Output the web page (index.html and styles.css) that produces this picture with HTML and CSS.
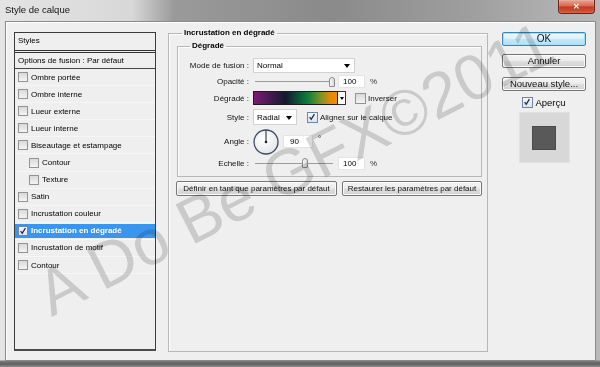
FILE: index.html
```html
<!DOCTYPE html>
<html lang="fr">
<head>
	<meta charset="UTF-8">
	<title>Style de calque</title>
	<link rel="stylesheet" href="styles.css">
</head>
<body>
	<div class="window">
		<div class="titlebar">
			<span class="title">Style de calque</span>
			<span class="close">&#x2715;</span>
		</div>
		<div class="dialog">
			<ul class="styles">
				<li class="head">Styles</li>
				<li class="head2">Options de fusion : Par défaut</li>
				<li><i class="cb"></i>Ombre portée</li>
				<li><i class="cb"></i>Ombre interne</li>
				<li><i class="cb"></i>Lueur externe</li>
				<li><i class="cb"></i>Lueur interne</li>
				<li><i class="cb"></i>Biseautage et estampage</li>
				<li class="sub"><i class="cb"></i>Contour</li>
				<li class="sub"><i class="cb"></i>Texture</li>
				<li><i class="cb"></i>Satin</li>
				<li><i class="cb"></i>Incrustation couleur</li>
				<li class="act"><i class="cb on"><svg viewBox="0 0 10 10"><path d="M2 5 L4 8 L8 1.5"/></svg></i>Incrustation en dégradé</li>
				<li><i class="cb"></i>Incrustation de motif</li>
				<li><i class="cb"></i>Contour</li>
			</ul>

			<fieldset class="panel">
				<legend>Incrustation en dégradé</legend>
				<fieldset class="group">
					<legend>Dégradé</legend>
					<div class="row r1">
						<label>Mode de fusion :</label>
						<div class="select wide">Normal<b></b></div>
					</div>
					<div class="row r2">
						<label>Opacité :</label>
						<div class="slider"><span class="thumb" style="margin-left:76px"></span></div>
						<div class="num">100</div>
						<span class="unit">%</span>
					</div>
					<div class="row r3">
						<label>Dégradé :</label>
						<div class="grad"></div>
						<div class="gbtn"><b></b></div>
						<i class="cb small"></i><span class="txt">Inverser</span>
					</div>
					<div class="row r4">
						<label>Style :</label>
						<div class="select narrow">Radial<b></b></div>
						<i class="cb small on"><svg viewBox="0 0 10 10"><path d="M2 5 L4 8 L8 1.5"/></svg></i><span class="txt">Aligner sur le calque</span>
					</div>
					<div class="row r5">
						<label>Angle :</label>
						<svg class="dial" viewBox="0 0 26 26">
							<defs>
								<radialGradient id="dg" cx="40%" cy="35%" r="70%">
									<stop offset="0" stop-color="#ffffff"/>
									<stop offset="1" stop-color="#e4e6ea"/>
								</radialGradient>
							</defs>
							<circle cx="13" cy="13" r="12" fill="url(#dg)" stroke="#3b4a66" stroke-width="1.3"/>
							<line x1="13" y1="13" x2="13" y2="1.5" stroke="#222" stroke-width="1"/>
							<circle cx="13" cy="13" r="1.3" fill="#222"/>
						</svg>
						<div class="num angle">90</div>
						<span class="deg">°</span>
					</div>
					<div class="row r6">
						<label>Echelle :</label>
						<div class="slider"><span class="thumb" style="margin-left:49px"></span></div>
						<div class="num">100</div>
						<span class="unit">%</span>
					</div>
				</fieldset>
				<div class="btns">
					<button class="b1">Définir en tant que paramètres par défaut</button>
					<button class="b2">Restaurer les paramètres par défaut</button>
				</div>
			</fieldset>

			<div class="side">
				<button class="ok">OK</button>
				<button class="cancel">Annuler</button>
				<button class="new">Nouveau style...</button>
				<div class="check"><i class="cb on"><svg viewBox="0 0 10 10"><path d="M2 5 L4 8 L8 1.5"/></svg></i>Aperçu</div>
				<div class="preview"><div class="sq"></div></div>
			</div>
		</div>
	</div>
	<div class="mark">A Do Be GFX©2011</div>
</body>
</html>
```

FILE: styles.css
```css
*{
	box-sizing: border-box;
}
body{
	margin: 0;
	width: 600px;
	height: 367px;
	overflow: hidden;
	position: relative;
	font-family: "Liberation Sans", Arial, sans-serif;
	font-size: 8px;
	color: #000;
}
ul{
	list-style: none;
	margin: 0;
	padding: 0;
}
.window{
	height: 367px;
	display: flex;
	flex-direction: column;
	padding: 0 4px 6px 5px;
	background:
		linear-gradient(to bottom, transparent 360px, #7c7c7c 361px, #5f5f5f 364px, #8c8c8c 367px),
		linear-gradient(to right, #e4e4e4 0, #d8d8d8 22%, #9a9a9a 29%, #8a8a8a 55%, #9e9e9e 78%, #b9b9b9 100%);
}
.titlebar{
	height: 21px;
	display: flex;
	align-items: flex-start;
	flex: none;
}
.title{
	font-size: 9.5px;
	line-height: 20px;
	color: #111;
}
.close{
	margin-left: auto;
	margin-right: 1px;
	width: 37px;
	height: 14px;
	font-size: 8px;
	font-weight: bold;
	line-height: 13px;
	text-align: center;
	color: #fff;
	background: linear-gradient(#eaa597, #d9644b 48%, #c23a20 52%, #d4583b);
	border: 1px solid #6b2216;
	border-top: none;
	border-radius: 0 0 4px 4px;
	box-shadow: 0 0 1px #fff inset;
}
.dialog{
	flex: 1;
	display: flex;
	align-items: flex-start;
	padding: 10px 0 0 8px;
	background: #efefef;
	border: 1px solid #8a8a8a;
	box-shadow: 1px 1px 0 #fff inset;
}

/* liste des styles */
.styles{
	width: 142px;
	height: 319px;
	flex: none;
	background: #efefef;
	border: 1px solid #3c3c3c;
	border-bottom: 2px solid #4a4a4a;
}
.styles li{
	height: 17.1px;
	display: flex;
	align-items: center;
	padding-left: 3px;
	border-bottom: 1px solid #f6f6f6;
	white-space: nowrap;
}
.styles .head{
	height: 20px;
	padding-bottom: 2px;
	border-bottom: 3px double #333;
}
.styles .head2{
	height: 16px;
	border-bottom: 1px solid #444;
}
.styles .sub{
	padding-left: 14px;
}
.styles .act{
	background: linear-gradient(#3a95ef, #3a95ef) 0 1px / 100% 14px no-repeat;
	color: #fff;
	font-weight: bold;
}
.cb{
	display: inline-block;
	flex: none;
	width: 10px;
	height: 10px;
	margin-right: 3px;
	border: 1px solid #939393;
	background: linear-gradient(#d9d9d9, #f4f4f4);
}
.cb svg{
	display: block;
	width: 8px;
	height: 8px;
}
.cb svg path{
	fill: none;
	stroke: #1d2b4a;
	stroke-width: 1.6;
}
.cb.on{
	border-color: #6f84a8;
	background: linear-gradient(#f4f6fa, #dfe5ee);
}

/* panneau central */
.panel{
	width: 320px;
	height: 324px;
	flex: none;
	margin: -4px 0 0 12px;
	padding: 3px 5px 0 8px;
	border: 1px solid #b7b7b7;
	box-shadow: 1px 1px 0 #fff inset;
	min-width: 0;
}
legend{
	font-weight: bold;
	line-height: 10px;
	padding: 0 2px;
}
.panel > legend{
	margin-left: 5px;
}
.group{
	margin: 0;
	padding: 6px 0 5px 0;
	border: 1px solid #b7b7b7;
	box-shadow: 1px 1px 0 #fff inset;
	min-width: 0;
}
.group > legend{
	margin-left: 12px;
}
.row{
	display: flex;
	align-items: center;
}
.row label{
	width: 71px;
	flex: none;
	margin-right: 4px;
	text-align: right;
	color: #111;
}
.r1{ height: 16px; }
.r2{ height: 17px; }
.r3{ height: 16px; }
.r4{ height: 22px; }
.r5{ height: 27px; }
.r6{ height: 16px; }
.select{
	display: flex;
	align-items: center;
	justify-content: space-between;
	height: 15px;
	padding: 1px 4px 0 3px;
	background: #fff;
	border: 1px solid #d2d2d2;
}
.select b, .gbtn b{
	width: 0;
	height: 0;
	border-left: 3.5px solid transparent;
	border-right: 3.5px solid transparent;
	border-top: 4px solid #000;
}
.wide{ width: 102px; }
.narrow{ width: 44px; height: 16px; }
.slider{
	width: 82px;
	height: 11px;
	display: flex;
	align-items: center;
	background: linear-gradient(#9b9b9b, #9b9b9b) 2px 5px / 78px 1px no-repeat;
}
.thumb{
	width: 6px;
	height: 10px;
	border: 1px solid #8a8a8a;
	border-radius: 3px 3px 1px 1px;
	background: linear-gradient(to right, #fbfbfb, #d8d8d8);
}
.num{
	height: 13px;
	width: 27px;
	margin-left: 3px;
	padding: 0 0 0 4px;
	line-height: 11px;
	background: #fff;
	border: 1px solid #e4e4e4;
}
.unit{
	margin-left: 5px;
	color: #333;
}
.grad{
	width: 85px;
	height: 14px;
	border: 1px solid #1b1b1b;
	background: linear-gradient(to right, #7d1a73 0, #4a1a55 18%, #131a2e 38%, #0c5a35 55%, #15803a 66%, #7a9325 80%, #e38a08 92%, #f58c00 100%);
}
.gbtn{
	width: 8px;
	height: 14px;
	display: flex;
	align-items: center;
	justify-content: center;
	background: #fff;
	border: 1px solid #333;
	border-left: none;
}
.gbtn b{
	border-left-width: 2.5px;
	border-right-width: 2.5px;
	border-top-width: 3px;
}
.cb.small{
	width: 11px;
	height: 11px;
	margin-right: 2px;
}
.r3 .cb{ margin-left: 9px; }
.r4 .cb{ margin-left: 10px; }
.txt{
	color: #111;
}
.dial{
	width: 26px;
	height: 26px;
	flex: none;
}
.num.angle{
	width: 30px;
	margin-left: 4px;
	padding-left: 6px;
}
.deg{
	align-self: flex-start;
	margin: 6px 0 0 5px;
	font-size: 8px;
	line-height: 10px;
}
.btns{
	display: flex;
	gap: 5px;
	margin: 4px 0 0 -1px;
}
button{
	height: 15px;
	padding: 0;
	font-family: "Liberation Sans", Arial, sans-serif;
	font-size: 8px;
	color: #111;
	border: 1px solid #767676;
	border-radius: 2px;
	background: linear-gradient(#f4f4f4, #ececec 48%, #dedede 52%, #d2d2d2);
	box-shadow: 0 0 0 1px #fafafa inset;
}
.b1{ width: 161px; }
.b2{ width: 140px; }

/* colonne de droite */
.side{
	width: 84px;
	flex: none;
	margin-left: 14px;
	display: flex;
	flex-direction: column;
	align-items: center;
}
.side button{
	width: 84px;
	height: 14px;
	font-size: 9.5px;
	line-height: 12px;
}
.side .ok{
	font-size: 10px;
	border-color: #3a84b6;
	background: linear-gradient(#eef8fe, #dcf0fc 48%, #c4e6fa 52%, #b6dff8);
	box-shadow: 0 0 0 1px #9fe0fb inset;
}
.side .cancel{ margin-top: 8px; }
.side .new{ margin-top: 9px; }
.check{
	display: flex;
	align-items: center;
	height: 11px;
	margin-top: 6px;
	font-size: 9.5px;
}
.check .cb{
	width: 11px;
	height: 11px;
	margin-right: 2px;
}
.preview{
	width: 51px;
	height: 51px;
	margin-top: 4px;
	display: flex;
	align-items: center;
	justify-content: center;
	background: #d8d8d8;
	border: 1px solid #e2e2e2;
}
.sq{
	width: 24px;
	height: 24px;
	background: #595959;
	border: 1px solid #4a4a4a;
}

/* filigrane */
.mark{
	position: absolute;
	left: 56px;
	top: 262px;
	font-family: "Liberation Sans", sans-serif;
	font-size: 64px;
	line-height: 64px;
	white-space: nowrap;
	color: #d8d8d8;
	mix-blend-mode: multiply;
	transform: rotate(-27deg);
	transform-origin: 0 100%;
	pointer-events: none;
}
```
